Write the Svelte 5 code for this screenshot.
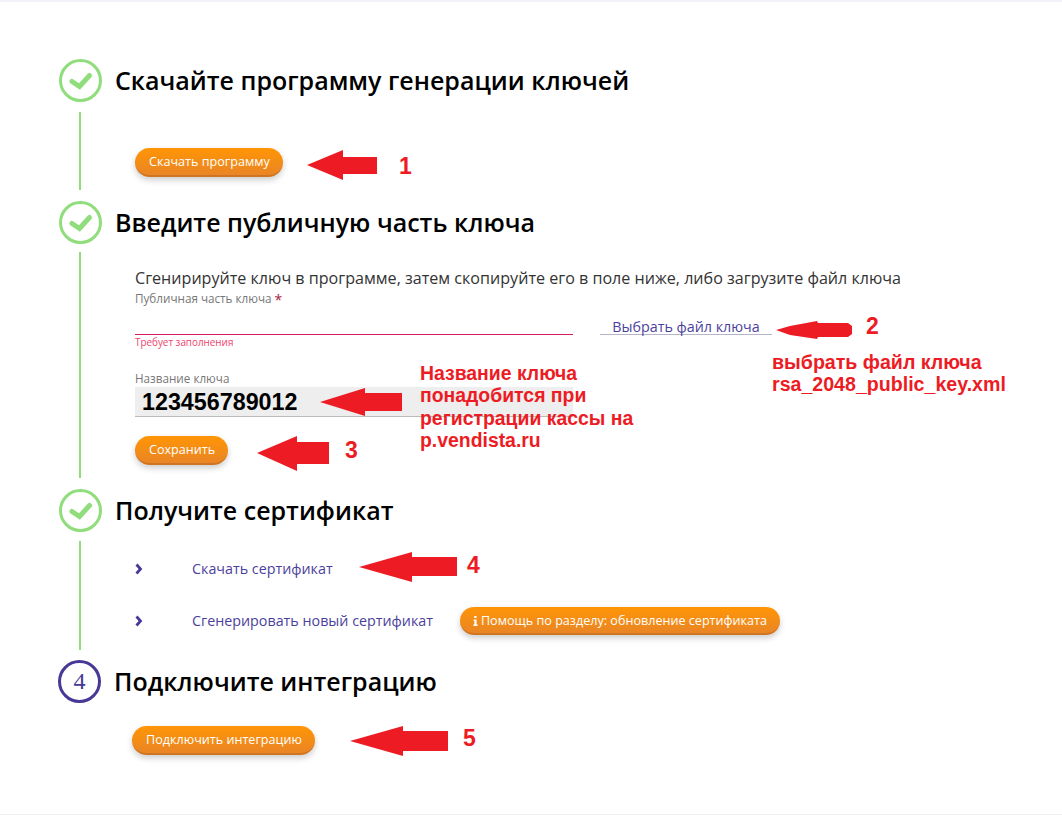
<script>
  const arrows = [
    "307,165 343,150 343,157 377,157 377,174 343,174 343,180",
    "776,330 790,326 817,321 818,323 848,323 852,326 852,334 848,337 818,337 817,339 790,335",
    "320,402 365,388 365,393 402,393 402,411 365,411 365,416",
    "257,453 297,436 297,442 329,442 329,464 297,464 297,471",
    "359,567 412,552 412,557 457,557 457,576 412,576 412,582",
    "350,741 403,726 403,731 448,731 448,751 403,751 403,756"
  ];
</script>

<div class="page">
  <section class="step">
    <header class="head">
      <span class="circle done"><svg viewBox="0 0 36 36" width="36" height="36" class="check"><path d="M9 18.5 L16.5 23.5 L26.5 12.5" /></svg></span>
      <h2>Скачайте программу генерации ключей</h2>
    </header>
    <div class="body b1">
      <button class="btn">Скачать программу</button>
    </div>
  </section>

  <section class="step">
    <header class="head">
      <span class="circle done"><svg viewBox="0 0 36 36" width="36" height="36" class="check"><path d="M9 18.5 L16.5 23.5 L26.5 12.5" /></svg></span>
      <h2>Введите публичную часть ключа</h2>
    </header>
    <div class="body b2">
      <p class="lead">Сгенирируйте ключ в программе, затем скопируйте его в поле ниже, либо загрузите файл ключа</p>
      <div class="keyrow">
        <div class="field">
          <div class="label">Публичная часть ключа <span class="req">*</span></div>
          <div class="input invalid"></div>
          <div class="error">Требует заполнения</div>
        </div>
        <div class="file">Выбрать файл ключа</div>
      </div>
      <div class="label name">Название ключа</div>
      <div class="input filled">123456789012</div>
      <button class="btn save">Сохранить</button>
    </div>
  </section>

  <section class="step">
    <header class="head">
      <span class="circle done"><svg viewBox="0 0 36 36" width="36" height="36" class="check"><path d="M9 18.5 L16.5 23.5 L26.5 12.5" /></svg></span>
      <h2>Получите сертификат</h2>
    </header>
    <div class="body b3">
      <div class="row">
        <svg class="chev" viewBox="0 0 8 12" width="8" height="12"><path d="M1.5 1.5 L5.5 6 L1.5 10.5" /></svg>
        <a href="#s">Скачать сертификат</a>
      </div>
      <div class="row second">
        <svg class="chev" viewBox="0 0 8 12" width="8" height="12"><path d="M1.5 1.5 L5.5 6 L1.5 10.5" /></svg>
        <a href="#g">Сгенерировать новый сертификат</a>
        <button class="btn help"><svg viewBox="0 0 5 10" width="5" height="10"><path d="M1.2 0h2.4v2H1.2zM.6 3.4h3v5h1V10H.4V8.4h1V5H.6z" /></svg>Помощь по разделу: обновление сертификата</button>
      </div>
    </div>
  </section>

  <section class="step last">
    <header class="head">
      <span class="circle num">4</span>
      <h2>Подключите интеграцию</h2>
    </header>
    <button class="btn connect">Подключить интеграцию</button>
  </section>

  <svg class="marks" width="1062" height="815" viewBox="0 0 1062 815">
    {#each arrows as points}
      <polygon {points} />
    {/each}
  </svg>
  <div class="note n1">1</div>
  <div class="note n2">2</div>
  <div class="note n3">3</div>
  <div class="note n4">4</div>
  <div class="note n5">5</div>
  <div class="note t1">выбрать файл ключа<br />rsa_2048_public_key.xml</div>
  <div class="note t2">Название ключа<br />понадобится при<br />регистрации кассы на<br />p.vendista.ru</div>
</div>

<style>
  :global(body) { margin: 0; background: #fff; }
  .page {
    position: relative;
    box-sizing: border-box;
    width: 1062px;
    height: 815px;
    padding: 59px 0 0 59px;
    font-family: "Open Sans", sans-serif;
    color: #222;
    border-bottom: 1px solid #f0f0f0;
    overflow: hidden;
  }
  .page::before {
    content: "";
    position: absolute;
    left: 0; right: 0; top: 0;
    height: 2px;
    background: #f2f2f8;
  }
  .head { display: flex; align-items: center; height: 43px; gap: 13px; }
  .circle {
    box-sizing: border-box;
    width: 43px;
    height: 43px;
    border-radius: 50%;
    display: flex;
    align-items: center;
    justify-content: center;
    flex: none;
  }
  .done { border: 3.5px solid #90dd7c; }
  .num {
    border: 3px solid #463a96;
    color: #463a96;
    font: 24px "Liberation Serif", serif;
  }
  .check path {
    fill: none;
    stroke: #90dd7c;
    stroke-width: 5;
    stroke-linecap: round;
    stroke-linejoin: miter;
  }
  h2 {
    margin: 0;
    padding-bottom: 2px;
    font-size: 25px;
    font-weight: 600;
    color: #000;
    line-height: 32px;
  }
  .body {
    margin-left: 20px;
    border-left: 2px solid #90dd7c;
    padding-left: 54px;
    box-sizing: border-box;
  }
  .b1 { margin-top: 10px; height: 78px; padding-top: 36px; margin-bottom: 11px; }
  .b2 { margin-top: 8px; height: 226px; padding-top: 16px; margin-bottom: 11px; }
  .b3 { margin-top: 9px; height: 109px; margin-bottom: 10px; padding-top: 18px; }
  .btn {
    display: block;
    box-sizing: border-box;
    height: 29px;
    border: 0;
    border-bottom: 2px solid #cf7420;
    border-radius: 15px;
    padding: 2px 13px 0 14px;
    background: linear-gradient(#ff9505, #e98526);
    box-shadow: 0 3px 6px rgba(0, 0, 0, 0.2);
    color: #fff;
    font: 12.6px/1 "Open Sans", sans-serif;
  }
  .lead { margin: 0; font-size: 16.1px; line-height: 20px; color: #333; }
  .keyrow { display: flex; align-items: flex-start; margin-top: 3px; }
  .field { width: 438px; }
  .label { font-size: 11.7px; line-height: 14px; color: #777; }
  .req { color: #a8203f; font-size: 14px; line-height: 10px; vertical-align: -2px; }
  .input { box-sizing: border-box; width: 438px; }
  .invalid { height: 30px; border-bottom: 1px solid #d81b60; }
  .error { padding-top: 1px; font-size: 9.9px; line-height: 13px; color: #f0426c; }
  .file {
    box-sizing: border-box;
    width: 172px;
    height: 20px;
    margin: 24px 0 0 27px;
    border-bottom: 1px solid #b5b5c5;
    text-align: center;
    color: #4b3f9e;
    font-size: 14.3px;
    line-height: 23px;
  }
  .name { margin-top: 22px; }
  .filled {
    height: 30px;
    margin-top: 2px;
    padding-left: 7px;
    background: #eee;
    border-bottom: 1px solid #bbb;
    font: bold 23.3px/30px "Liberation Sans", sans-serif;
    color: #000;
  }
  .save { margin-top: 19px; }
  .row { display: flex; align-items: center; height: 20px; }
  .second { margin-top: 32px; }
  .chev { flex: none; margin-right: 49px; }
  .chev path { fill: none; stroke: #463a96; stroke-width: 2.8; }
  a { color: #4b3f9e; font-size: 14.3px; text-decoration: none; line-height: 20px; }
  .help {
    flex: none;
    margin-left: 27px;
    display: flex;
    align-items: center;
    gap: 3px;
    height: 28px;
    padding: 2px 13px 0 13px;
  }
  .help svg { fill: #fff; }
  .last { margin-left: -1px; }
  .connect { margin: 23px 0 0 74px; }
  .marks { position: absolute; left: 0; top: 0; pointer-events: none; }
  .marks polygon { fill: #ed1c24; }
  .note {
    position: absolute;
    font: bold 19.4px/22.3px "Liberation Sans", sans-serif;
    color: #ed1c24;
    white-space: nowrap;
  }
  .n1, .n2, .n3, .n4, .n5 { font-size: 23px; line-height: 26px; }
  .n1 { left: 399px; top: 153px; }
  .n2 { left: 866px; top: 313px; }
  .n3 { left: 345px; top: 437px; }
  .n4 { left: 467px; top: 552px; }
  .n5 { left: 463px; top: 725px; }
  .t1 { left: 772px; top: 351px; font-size: 19.6px; }
  .t2 { left: 420px; top: 362px; }
</style>
